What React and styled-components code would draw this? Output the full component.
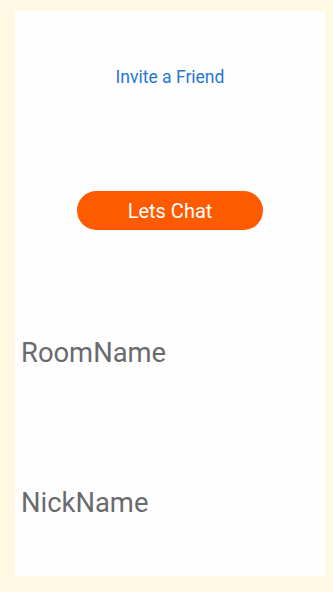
import React from 'react'
import styled, { createGlobalStyle } from 'styled-components'

const GlobalStyle = createGlobalStyle`
  html, body {
    margin: 0;
    padding: 0;
    background-color: #fff8e3;
  }
  body {
    font-family: Roboto, "Liberation Sans", sans-serif;
  }
`

const Screen = styled.div`
  width: 333px;
  height: 592px;
  box-sizing: border-box;
  padding: 11px 8px 16px 15px;
  display: flex;
`

const Panel = styled.div`
  flex: 1;
  min-width: 0;
  background-color: #fefeff;
  display: flex;
  flex-direction: column;
  align-items: center;
  padding-top: 56px;
`

const InviteLink = styled.a`
  font-size: 17.5px;
  line-height: 21px;
  color: #1e78d2;
  text-decoration: none;
  cursor: pointer;
`

const ChatButton = styled.button`
  margin-top: 103px;
  width: 186px;
  height: 39px;
  border: none;
  border-radius: 20px;
  background-color: #fe5a00;
  color: #ffffff;
  font-family: Roboto, "Liberation Sans", sans-serif;
  font-size: 20px;
  padding: 0;
  cursor: pointer;
`

const NameInput = styled.input`
  align-self: stretch;
  width: 100%;
  min-width: 0;
  box-sizing: border-box;
  margin-top: ${props => props.gap}px;
  height: 32px;
  padding: 0 6px;
  border: none;
  outline: none;
  background: transparent;
  font-family: Roboto, "Liberation Sans", sans-serif;
  font-size: 27.4px;
  line-height: 32px;
  color: #6a6a6e;
  &::placeholder {
    color: #6a6a6e;
  }
`

export default function App() {
  return (
    <>
      <GlobalStyle />
      <Screen>
        <Panel>
          <InviteLink>Invite a Friend</InviteLink>
          <ChatButton>Lets Chat</ChatButton>
          <NameInput gap={107} placeholder="RoomName" />
          <NameInput gap={118} placeholder="NickName" />
        </Panel>
      </Screen>
    </>
  )
}
